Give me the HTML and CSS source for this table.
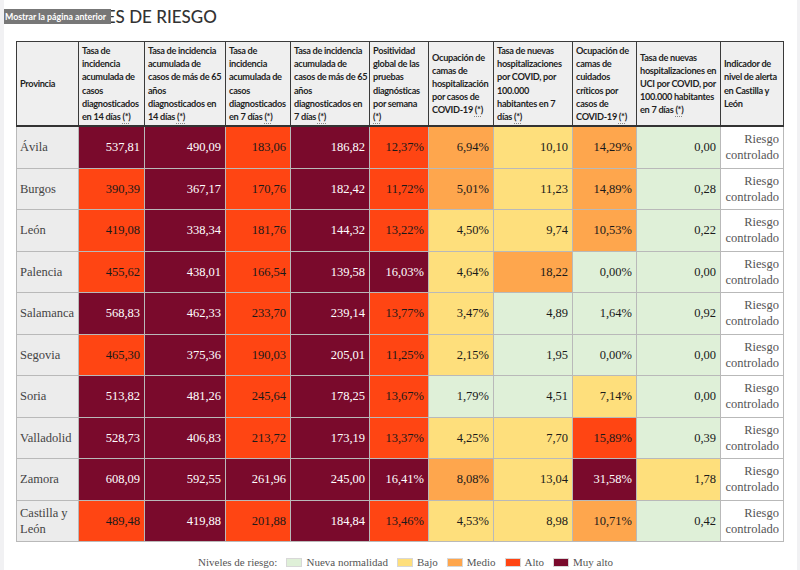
FILE: index.html
```html
<!DOCTYPE html>
<html lang="es">
<head>
<meta charset="utf-8">
<title>Niveles de riesgo</title>
<link rel="stylesheet" href="styles.css">
</head>
<body>
<div class="frame">
  <div class="tooltip">Mostrar la página anterior</div>
  <h1 class="title">INDICADORES DE RIESGO</h1>
  <table class="risk">
    <colgroup>
      <col style="width:62px"><col style="width:66px"><col style="width:81px"><col style="width:65px"><col style="width:79px"><col style="width:59px"><col style="width:65px"><col style="width:79px"><col style="width:64px"><col style="width:84px"><col style="width:63px">
    </colgroup>
    <thead>
      <tr>
        <th>Provincia</th>
        <th>Tasa de<br>incidencia<br>acumulada de<br>casos<br>diagnosticados<br>en 14 días <span class="ast">(*)</span></th>
        <th>Tasa de incidencia<br>acumulada de<br>casos de más de 65<br>años<br>diagnosticados en<br>14 días <span class="ast">(*)</span></th>
        <th>Tasa de<br>incidencia<br>acumulada de<br>casos<br>diagnosticados<br>en 7 días <span class="ast">(*)</span></th>
        <th>Tasa de incidencia<br>acumulada de<br>casos de más de 65<br>años<br>diagnosticados en<br>7 días <span class="ast">(*)</span></th>
        <th>Positividad<br>global de las<br>pruebas<br>diagnósticas<br>por semana<br><span class="ast">(*)</span></th>
        <th>Ocupación de<br>camas de<br>hospitalización<br>por casos de<br>COVID-19 <span class="ast">(*)</span></th>
        <th>Tasa de nuevas<br>hospitalizaciones<br>por COVID, por<br>100.000<br>habitantes en 7<br>días <span class="ast">(*)</span></th>
        <th>Ocupación de<br>camas de<br>cuidados<br>críticos por<br>casos de<br>COVID-19 <span class="ast">(*)</span></th>
        <th>Tasa de nuevas<br>hospitalizaciones en<br>UCI por COVID, por<br>100.000 habitantes<br>en 7 días <span class="ast">(*)</span></th>
        <th>Indicador de<br>nivel de alerta<br>en Castilla y<br>León</th>
      </tr>
    </thead>
    <tbody>
      <tr><td class="prov">Ávila</td><td class="ma">537,81</td><td class="ma">490,09</td><td class="al">183,06</td><td class="ma">186,82</td><td class="al">12,37%</td><td class="me">6,94%</td><td class="ba">10,10</td><td class="me">14,29%</td><td class="nn">0,00</td><td class="ind">Riesgo controlado</td></tr>
      <tr><td class="prov">Burgos</td><td class="al">390,39</td><td class="ma">367,17</td><td class="al">170,76</td><td class="ma">182,42</td><td class="al">11,72%</td><td class="me">5,01%</td><td class="ba">11,23</td><td class="me">14,89%</td><td class="nn">0,28</td><td class="ind">Riesgo controlado</td></tr>
      <tr><td class="prov">León</td><td class="al">419,08</td><td class="ma">338,34</td><td class="al">181,76</td><td class="ma">144,32</td><td class="al">13,22%</td><td class="ba">4,50%</td><td class="ba">9,74</td><td class="me">10,53%</td><td class="nn">0,22</td><td class="ind">Riesgo controlado</td></tr>
      <tr><td class="prov">Palencia</td><td class="al">455,62</td><td class="ma">438,01</td><td class="al">166,54</td><td class="ma">139,58</td><td class="ma">16,03%</td><td class="ba">4,64%</td><td class="me">18,22</td><td class="nn">0,00%</td><td class="nn">0,00</td><td class="ind">Riesgo controlado</td></tr>
      <tr><td class="prov">Salamanca</td><td class="ma">568,83</td><td class="ma">462,33</td><td class="al">233,70</td><td class="ma">239,14</td><td class="al">13,77%</td><td class="ba">3,47%</td><td class="nn">4,89</td><td class="nn">1,64%</td><td class="nn">0,92</td><td class="ind">Riesgo controlado</td></tr>
      <tr><td class="prov">Segovia</td><td class="al">465,30</td><td class="ma">375,36</td><td class="al">190,03</td><td class="ma">205,01</td><td class="al">11,25%</td><td class="ba">2,15%</td><td class="nn">1,95</td><td class="nn">0,00%</td><td class="nn">0,00</td><td class="ind">Riesgo controlado</td></tr>
      <tr><td class="prov">Soria</td><td class="ma">513,82</td><td class="ma">481,26</td><td class="al">245,64</td><td class="ma">178,25</td><td class="al">13,67%</td><td class="nn">1,79%</td><td class="nn">4,51</td><td class="ba">7,14%</td><td class="nn">0,00</td><td class="ind">Riesgo controlado</td></tr>
      <tr><td class="prov">Valladolid</td><td class="ma">528,73</td><td class="ma">406,83</td><td class="al">213,72</td><td class="ma">173,19</td><td class="al">13,37%</td><td class="ba">4,25%</td><td class="ba">7,70</td><td class="al">15,89%</td><td class="nn">0,39</td><td class="ind">Riesgo controlado</td></tr>
      <tr><td class="prov">Zamora</td><td class="ma">608,09</td><td class="ma">592,55</td><td class="ma">261,96</td><td class="ma">245,00</td><td class="ma">16,41%</td><td class="me">8,08%</td><td class="ba">13,04</td><td class="ma">31,58%</td><td class="ba">1,78</td><td class="ind">Riesgo controlado</td></tr>
      <tr><td class="prov">Castilla y León</td><td class="al">489,48</td><td class="ma">419,88</td><td class="al">201,88</td><td class="ma">184,84</td><td class="al">13,46%</td><td class="ba">4,53%</td><td class="ba">8,98</td><td class="me">10,71%</td><td class="nn">0,42</td><td class="ind">Riesgo controlado</td></tr>
    </tbody>
  </table>
  <div class="legend">
    <span class="legend-title">Niveles de riesgo:</span>
    <span class="item"><span class="sw nn"></span>Nueva normalidad</span>
    <span class="item"><span class="sw ba"></span>Bajo</span>
    <span class="item"><span class="sw me"></span>Medio</span>
    <span class="item"><span class="sw al"></span>Alto</span>
    <span class="item"><span class="sw ma"></span>Muy alto</span>
  </div>
</div>
</body>
</html>
```
FILE: styles.css
```css
html, body {
  margin: 0;
  padding: 0;
  background: #ffffff;
}

.frame {
  position: relative;
  height: 570px;
  box-sizing: border-box;
  border-left: 4px solid #f1f1f3;
  border-right: 3px solid #f1f1f3;
  padding: 0 0 0 12px;
  overflow: hidden;
}

.tooltip {
  position: absolute;
  left: -4px;
  top: 9px;
  width: 111px;
  height: 15px;
  box-sizing: border-box;
  background: #777777;
  color: #ffffff;
  font-family: "Lato", sans-serif;
  font-weight: 700;
  font-size: 8.8px;
  line-height: 15px;
  padding-left: 5px;
  white-space: nowrap;
  z-index: 2;
}

.title {
  margin: 0 0 0 -6px;
  padding: 7px 0 0 0;
  height: 41px;
  box-sizing: border-box;
  font-family: "Lato", sans-serif;
  font-weight: 500;
  font-size: 17px;
  line-height: 20px;
  color: #333333;
  white-space: nowrap;
}

.risk {
  table-layout: fixed;
  width: 767px;
  border-collapse: collapse;
}

.risk th {
  background: #efefef;
  border: 1px solid #3a3a3a;
  font-family: "Lato", sans-serif;
  font-weight: 700;
  font-size: 9.2px;
  letter-spacing: -0.3px;
  line-height: 13.1px;
  color: #1f1f1f;
  text-align: left;
  vertical-align: middle;
  white-space: nowrap;
  padding: 2px 0 2px 3px;
  height: 79px;
}

.risk thead tr {
  border-bottom: 2px solid #333333;
}

.ast {
  text-decoration: underline dotted #888888;
  text-underline-offset: 3px;
}

.risk td {
  border: 1px solid #b9b9b9;
  font-family: "Liberation Serif", serif;
  font-size: 12.5px;
  line-height: 16px;
  color: #1a1a1a;
  text-align: right;
  vertical-align: middle;
  padding: 0 4px;
  height: 40.5px;
}

.risk td.prov {
  background: #ececec;
  text-align: left;
  color: #444444;
  padding-left: 3px;
}

.risk td.ind {
  background: #ffffff;
  color: #555555;
}

.risk td.ma { background: #7a0a2c; color: #ffffff; }
.risk td.al { background: #ff4513; }
.risk td.me { background: #fea64d; }
.risk td.ba { background: #fedf7c; }
.risk td.nn { background: #dff0d8; }

.legend {
  display: flex;
  align-items: center;
  gap: 9px;
  margin: 14px 0 0 182px;
  font-family: "Liberation Serif", serif;
  font-size: 11px;
  color: #555555;
}

.item {
  display: flex;
  align-items: center;
  gap: 4px;
}

.sw {
  display: inline-block;
  width: 14px;
  height: 7px;
  border: 1px solid #d8d8d8;
}

.sw.nn { background: #dff0d8; }
.sw.ba { background: #fedf7c; }
.sw.me { background: #fea64d; }
.sw.al { background: #ff4513; }
.sw.ma { background: #7a0a2c; }
```
